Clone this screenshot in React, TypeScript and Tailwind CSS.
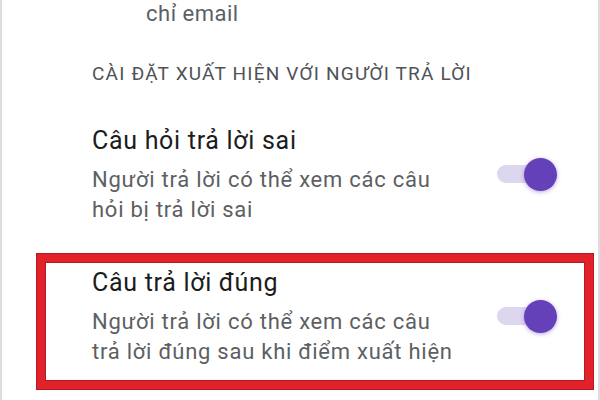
import React from "react";

function Toggle() {
  return (
    <div className="relative w-[60px] h-[33px]">
      <div className="absolute left-0 top-[7px] w-[54px] h-[18px] rounded-full bg-[#ddd6ef]" />
      <div className="absolute left-[27px] top-0 w-[33px] h-[33px] rounded-full bg-[#6541b9] shadow-[0_1px_4px_rgba(103,58,183,0.45)]" />
    </div>
  );
}

function Item({ title, lines }: { title: string; lines: string[] }) {
  return (
    <div className="flex items-center justify-between">
      <div>
        <div className="text-[25px] leading-[30px] tracking-[0.7px] text-[#1c1c1c]">{title}</div>
        <div className="mt-[9px] text-[22px] leading-[30px] tracking-[0.75px] text-[#5c5f63]">
          {lines.map((l, i) => (
            <div key={i}>{l}</div>
          ))}
        </div>
      </div>
      <div className="mb-[3px]">
        <Toggle />
      </div>
    </div>
  );
}

export default function App() {
  return (
    <div
      className="w-[600px] h-[400px] bg-white border-x-2 border-[#dcdce2] overflow-hidden"
      style={{ fontFamily: "Roboto, 'Noto Sans', sans-serif" }}
    >
      <div className="pt-[2px] pl-[144px] text-[22px] leading-[24px] tracking-[0.5px] text-[#5c5f63]">chỉ email</div>
      <div className="pl-[90px] mt-[36px] text-[19px] leading-[24px] tracking-[1.2px] text-[#4f5257]">
        CÀI ĐẶT XUẤT HIỆN VỚI NGƯỜI TRẢ LỜI
      </div>
      <div className="pl-[90px] pr-[41px] mt-[40px]">
        <Item title="Câu hỏi trả lời sai" lines={["Người trả lời có thể xem các câu", "hỏi bị trả lời sai"]} />
      </div>
      <div className="ml-[35px] mr-[5px] mt-[29px] h-[135px] border-[8px] border-[#e3212a] outline outline-1 outline-[#b01c22] shadow-[inset_0_0_0_1px_#b01c22]">
        <div className="pl-[47px] pr-[28px] pt-[6px]">
          <Item title="Câu trả lời đúng" lines={["Người trả lời có thể xem các câu", "trả lời đúng sau khi điểm xuất hiện"]} />
        </div>
      </div>
    </div>
  );
}
